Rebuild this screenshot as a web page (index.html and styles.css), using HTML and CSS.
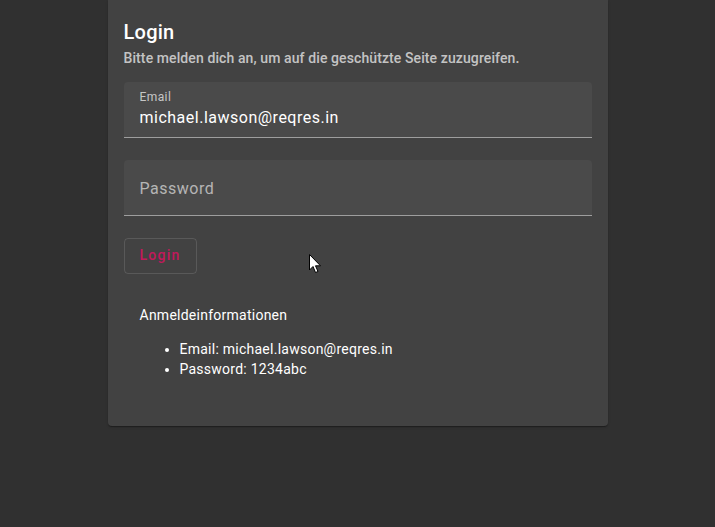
FILE: index.html
```html
<!DOCTYPE html>
<html lang="de">
<head>
<meta charset="utf-8">
<title>Login</title>
<link rel="stylesheet" href="styles.css">
</head>
<body>
<main class="page">
  <section class="card">
    <h1 class="card-title">Login</h1>
    <p class="card-subtitle">Bitte melden dich an, um auf die geschützte Seite zuzugreifen.</p>
    <form class="form">
      <div class="field">
        <span class="field-label">Email</span>
        <span class="field-value">michael.lawson@reqres.in</span>
      </div>
      <div class="field field-empty">
        <span class="field-placeholder">Password</span>
      </div>
      <div class="actions">
        <button type="button" class="btn-stroked">Login</button>
      </div>
    </form>
    <div class="info">
      <p class="info-title">Anmeldeinformationen</p>
      <ul class="info-list">
        <li>Email: michael.lawson@reqres.in</li>
        <li>Password: 1234abc</li>
      </ul>
    </div>
  </section>
  <svg class="cursor" width="13" height="20" viewBox="0 0 13 20" aria-hidden="true">
    <path d="M0.5 0.5 L0.5 16 L4 12.5 L6.5 18.5 L9 17.5 L6.5 11.8 L11.5 11.8 Z" fill="#fff" stroke="#000" stroke-width="1"/>
  </svg>
</main>
</body>
</html>
```
FILE: styles.css
```css
* { box-sizing: border-box; }
html, body {
  margin: 0;
  height: 100%;
  background: #303030;
}
body {
  font-family: Roboto, "Liberation Sans", sans-serif;
  color: #fff;
}
.page {
  position: relative;
  min-height: 100%;
  display: flex;
  justify-content: center;
  align-items: flex-start;
}
.card {
  width: 500px;
  background: #424242;
  padding: 16px 16px 17px;
  border-radius: 0 0 4px 4px;
  box-shadow: 0 2px 1px -1px rgba(0,0,0,.2), 0 1px 1px 0 rgba(0,0,0,.14), 0 1px 3px 0 rgba(0,0,0,.12);
}
.card-title {
  margin: 0 0 8px;
  font-size: 20px;
  line-height: 32px;
  font-weight: 500;
  letter-spacing: 0.25px;
}
.card-subtitle {
  margin: -8px 0 14px;
  font-size: 14px;
  line-height: 20px;
  font-weight: 500;
  letter-spacing: 0.1px;
  color: rgba(255,255,255,.7);
}
.form {
  display: flex;
  flex-direction: column;
  gap: 22px;
}
.field {
  height: 56px;
  background: #4a4a4a;
  border-radius: 4px 4px 0 0;
  border-bottom: 1px solid #9e9e9e;
  padding: 7px 16px 0;
  display: flex;
  flex-direction: column;
}
.field-label {
  font-size: 12px;
  line-height: 16px;
  letter-spacing: 0.4px;
  color: rgba(255,255,255,.7);
  margin-bottom: 3px;
}
.field-value {
  font-size: 16px;
  line-height: 19px;
  letter-spacing: 0.5px;
  color: #fff;
}
.field-empty {
  padding-top: 19px;
}
.field-placeholder {
  font-size: 16px;
  line-height: 20px;
  letter-spacing: 0.5px;
  color: rgba(255,255,255,.6);
}
.actions {
  display: flex;
}
.btn-stroked {
  height: 36px;
  padding: 0 15px 2px;
  border: 1px solid rgba(255,255,255,.12);
  border-radius: 4px;
  background: transparent;
  color: #c2185b;
  font-family: Roboto, "Liberation Sans", sans-serif;
  font-size: 14px;
  font-weight: 500;
  letter-spacing: 1.25px;
}
.info {
  margin-top: 15px;
  padding: 16px;
  font-size: 14px;
  line-height: 20px;
  letter-spacing: 0.25px;
}
.info-title {
  margin: 0 0 14px;
}
.info-list {
  margin: 14px 0;
  padding-left: 40px;
}
.cursor {
  position: absolute;
  left: 309px;
  top: 254px;
}
```
